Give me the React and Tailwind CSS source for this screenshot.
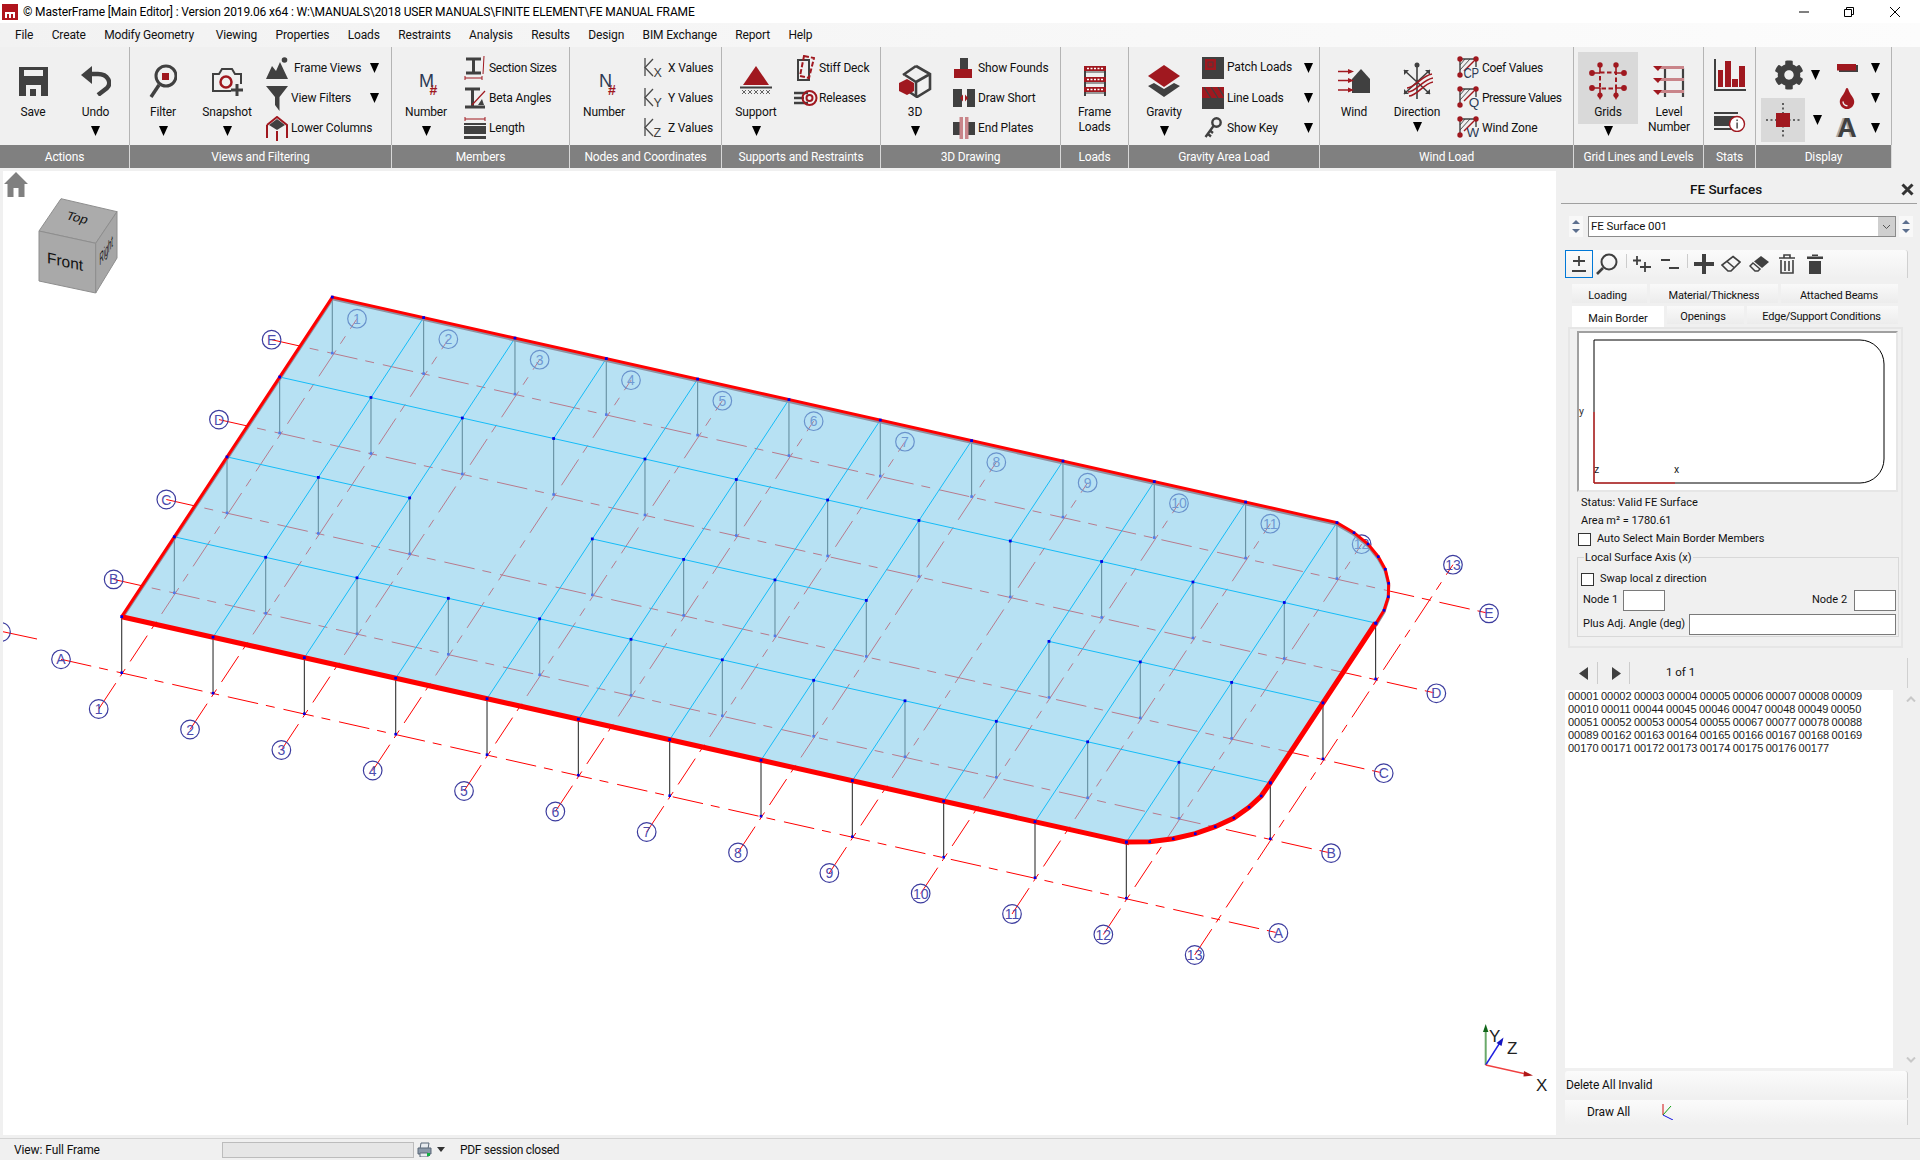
import React from "react";
import { FaCog, FaTint } from "react-icons/fa";

const D = "#404040";
const R = "#a0181f";
const L = "#f0f0f0";
const Svg = ({ w, h, children, className }) => (
  <svg width={w} height={h} viewBox={`0 0 ${w} ${h}`} className={"block shrink-0 " + (className || "")}>
    {children}
  </svg>
);
const Arrow = ({ className = "" }) => (
  <svg width="9" height="10" viewBox="0 0 9 10" className={"block shrink-0 " + className}>
    <path d="M0 0H9L4.5 10Z" fill="#000" />
  </svg>
);

const Icons = {
  save: (
    <Svg w={29} h={29}>
      <rect width="29" height="29" fill={D} />
      <rect x="5" y="3" width="19" height="6" fill={L} />
      <rect x="7" y="18" width="15" height="11" fill={L} />
      <rect x="11" y="22" width="6" height="7" fill={D} />
    </Svg>
  ),
  undo: (
    <Svg w={30} h={30}>
      <path d="M0 9 L11 0 V18Z" fill={D} />
      <path d="M8 8 H17 C27 8 31 17 26 22 L17 29" stroke={D} strokeWidth="4.4" fill="none" />
    </Svg>
  ),
  filter: (
    <Svg w={28} h={34}>
      <circle cx="17" cy="12" r="10" fill="none" stroke={D} strokeWidth="3" />
      <rect x="13" y="9" width="7" height="7" fill={R} />
      <path d="M10 21 L2 33" stroke={D} strokeWidth="3.5" />
    </Svg>
  ),
  snapshot: (
    <Svg w={32} h={29}>
      <path d="M20 24H2V7H8L11 2H21L24 7H30V17" fill="none" stroke={D} strokeWidth="2" />
      <circle cx="15" cy="15" r="5.5" fill="none" stroke={R} strokeWidth="2.5" />
      <path d="M26 17V29 M20 23H32" stroke={D} strokeWidth="3" />
    </Svg>
  ),
  frameViews: (
    <Svg w={22} h={22}>
      <path d="M0 22 L6 9 L10 14 L14 5 L22 22Z" fill={D} />
      <circle cx="18.5" cy="3" r="2.8" fill={D} />
    </Svg>
  ),
  viewFilters: (
    <Svg w={22} h={25}>
      <path d="M0 0H22L13.5 11V25L9 19V11Z" fill={D} />
    </Svg>
  ),
  lowerCols: (
    <Svg w={22} h={25}>
      <path d="M1 9 L11 1 L21 9 V22 M1 9V22 M11 15V25" fill="none" stroke={R} strokeWidth="2" />
      <path d="M3 9 L11 3 L19 9 L11 14Z" fill={D} />
    </Svg>
  ),
  m: (
    <Svg w={34} h={36}>
      <text x="10" y="24" fontSize="18" fontFamily="Liberation Sans, sans-serif" fill="#2c3a55">M</text>
      <text x="20.5" y="32" fontSize="14" fontWeight="700" fontFamily="Liberation Sans, sans-serif" fill={R}>#</text>
    </Svg>
  ),
  n: (
    <Svg w={34} h={36}>
      <text x="12" y="24" fontSize="18" fontFamily="Liberation Sans, sans-serif" fill="#2c3a55">N</text>
      <text x="21" y="32" fontSize="14" fontWeight="700" fontFamily="Liberation Sans, sans-serif" fill={R}>#</text>
    </Svg>
  ),
  section: (
    <Svg w={22} h={26}>
      <path d="M2 4H17 M9.5 4V18 M2 18H17" stroke={D} strokeWidth="3" fill="none" />
      <path d="M20 1 L19 19" stroke={R} strokeWidth="1" />
      <path d="M1 23H18 M1 21V25 M18 21V25" stroke={R} strokeWidth="1" />
    </Svg>
  ),
  beta: (
    <Svg w={22} h={24}>
      <path d="M1 3H16 M8.5 3V21 M1 21H21" stroke={D} strokeWidth="3" fill="none" />
      <path d="M21 5 L8 19" stroke={R} strokeWidth="1.2" />
      <path d="M14 19 L18 13 L20 19Z" fill={D} />
    </Svg>
  ),
  length: (
    <Svg w={22} h={24}>
      <path d="M1 3H21 M1 1V5 M21 1V5" stroke={R} strokeWidth="1" fill="none" />
      <rect y="7" width="22" height="2" fill={D} />
      <rect y="10" width="22" height="8" fill={D} />
      <rect y="20" width="22" height="3" fill={D} />
    </Svg>
  ),
  support: (
    <Svg w={32} h={32}>
      <path d="M3 20 L16 1 L29 20Z" fill={R} />
      <path d="M0 22.5H32" stroke={D} strokeWidth="2" />
      <path d="M2 25 L6 29 M6 25 L2 29 M8 25 L12 29 M12 25 L8 29 M14 25 L18 29 M18 25 L14 29 M20 25 L24 29 M24 25 L20 29 M26 25 L30 29 M30 25 L26 29" stroke={D} strokeWidth="0.8" />
    </Svg>
  ),
  stiff: (
    <Svg w={18} h={26}>
      <rect x="1" y="5" width="11" height="20" fill="none" stroke={D} strokeWidth="2" />
      <path d="M7 1 L17 3 L12 23 L3 21Z" fill="none" stroke={R} strokeWidth="2" strokeDasharray="5 2" />
    </Svg>
  ),
  releases: (
    <Svg w={24} h={20}>
      <path d="M0 5H14 M0 10H10 M0 15H14" stroke={D} strokeWidth="2.5" />
      <circle cx="15.5" cy="10" r="7" fill="none" stroke={R} strokeWidth="2" />
      <circle cx="15.5" cy="10" r="3" fill="none" stroke={R} strokeWidth="2" />
    </Svg>
  ),
  threeD: (
    <Svg w={33} h={34}>
      <path d="M17 2 L31 10 V25 L18 33 L9 27 M4 11 L17 2 M17 18 L31 10 M17 18 V32 M17 18 L6 11" fill="none" stroke={D} strokeWidth="2.6" />
      <path d="M8 15 L15 19 V27 L8 31 L0 27 V19Z" fill={R} />
    </Svg>
  ),
  founds: (
    <Svg w={20} h={20}>
      <rect x="6" width="8" height="11" fill={D} />
      <rect y="11" width="18" height="9" fill={R} />
    </Svg>
  ),
  short: (
    <Svg w={22} h={18}>
      <rect width="9" height="18" fill={D} />
      <rect x="14" width="8" height="18" fill={D} />
      <path d="M7 9 L10 5.5 V12.5Z M15 9 L12 5.5 V12.5Z" fill={R} />
    </Svg>
  ),
  plates: (
    <Svg w={22} h={22}>
      <rect y="5" width="8" height="13" fill={D} />
      <rect x="14" y="5" width="8" height="13" fill={D} />
      <rect x="6.5" width="3.5" height="22" fill="#c9858a" />
      <rect x="12" width="3.5" height="22" fill="#c9858a" />
    </Svg>
  ),
  frameLoads: (
    <Svg w={22} h={30}>
      <path d="M1 0V30 M21 0V30" stroke={D} strokeWidth="2" />
      <rect width="22" height="5" fill={R} />
      <rect y="11" width="22" height="5" fill={R} />
      <rect y="21" width="22" height="5" fill={R} />
      <path d="M3 2.5H19 M3 13.5H19 M3 23.5H19" stroke="#fff" strokeWidth="1.5" strokeDasharray="2 1.5" />
      <path d="M0 6H22 M0 17H22 M0 27H22" stroke={D} strokeWidth="1.2" />
    </Svg>
  ),
  gravity: (
    <Svg w={32} h={32}>
      <path d="M16 0 L32 11 L16 22 L0 11Z" fill={R} />
      <path d="M6 18 L16 24 L26 18 L32 21 L16 32 L0 21Z" fill={D} />
    </Svg>
  ),
  patch: (
    <Svg w={22} h={22}>
      <rect width="22" height="22" fill={D} />
      <rect x="3" y="2" width="11" height="11" fill={R} />
      <rect x="6" y="5" width="5" height="5" fill="none" stroke={D} strokeWidth="0.8" />
    </Svg>
  ),
  line: (
    <Svg w={22} h={22}>
      <rect width="22" height="22" fill={D} />
      <rect width="22" height="11" fill={R} />
      <path d="M2 0 L9 11 M9 0 L16 11 M16 0 L23 11" stroke={D} strokeWidth="1.3" />
    </Svg>
  ),
  key: (
    <Svg w={18} h={22}>
      <circle cx="12.5" cy="5.5" r="4.2" fill="none" stroke={D} strokeWidth="2.4" />
      <path d="M9.5 9 L1.5 20 M4 17 L7 19.5 M6.5 14 L9 16" stroke={D} strokeWidth="2.4" fill="none" />
    </Svg>
  ),
  wind: (
    <Svg w={32} h={24}>
      <path d="M14 10 L23 0 L32 10 V24 H14Z" fill={D} />
      <path d="M0 2.5H12 M0 11.5H12 M0 21H12" stroke={R} strokeWidth="1.6" />
      <path d="M16 2.5 L10 0 V5Z M16 11.5 L10 9 V14Z M16 21 L10 18.5 V23.5Z" fill={R} />
    </Svg>
  ),
  direction: (
    <Svg w={32} h={38}>
      <path d="M16 3V37 M3 8 L29 32 M29 8 L3 32" stroke={D} strokeWidth="1.6" />
      <circle cx="16" cy="3" r="2.5" fill={D} />
      <path d="M3 8 L8 8 L3 13Z M29 8 L24 8 L29 13Z M3 32 L8 32 L3 27Z M29 32 L24 32 L29 27Z" fill={D} />
      <path d="M6 26 C14 26 20 14 31 12 M7 30 C15 30 21 18 32 16 M8 34 C16 34 22 22 32 20" stroke={R} strokeWidth="1.6" fill="none" />
    </Svg>
  ),
  grids: (
    <Svg w={38} h={38}>
      <path d="M11 3V10 M27 3V10 M11 26V34 M27 26V34 M3 11H11 M27 11H35 M3 26H11 M27 26H35" stroke={R} strokeWidth="1.6" />
      <rect x="11" y="10.5" width="16" height="16" fill="none" stroke={R} strokeWidth="2" strokeDasharray="4.5 2.5" />
      <circle cx="11" cy="3" r="2.7" fill={R} /><circle cx="27" cy="3" r="2.7" fill={R} />
      <circle cx="3" cy="11" r="2.9" fill={R} /><circle cx="35" cy="11" r="2.9" fill={R} />
      <circle cx="3" cy="26" r="2.9" fill={R} /><circle cx="35" cy="26" r="2.9" fill={R} />
      <path d="M8.5 33 H13.5 L11 38Z M24.5 33 H29.5 L27 38Z" fill={R} />
      <circle cx="11" cy="33" r="2.6" fill={R} /><circle cx="27" cy="33" r="2.6" fill={R} />
    </Svg>
  ),
  level: (
    <Svg w={32} h={32}>
      <path d="M12 3V32 M30 3V32" stroke={D} strokeWidth="2.2" />
      <rect x="5" y="1" width="26" height="3" fill="#c9858a" />
      <rect x="5" y="13" width="26" height="3" fill="#c9858a" />
      <rect x="5" y="25" width="26" height="3" fill="#c9858a" />
      <path d="M0 1H9 L5 6Z M0 13H9 L5 18Z M0 25H9 L5 30Z" fill={R} />
    </Svg>
  ),
  stats: (
    <Svg w={32} h={32}>
      <path d="M1 0V31H32" stroke={D} strokeWidth="2" fill="none" />
      <rect x="4" y="11" width="5" height="17" fill={R} />
      <rect x="11" y="2" width="6" height="26" fill={R} />
      <rect x="18" y="20" width="6" height="8" fill={R} />
      <rect x="25" y="7" width="6" height="21" fill={R} />
    </Svg>
  ),
  info: (
    <Svg w={32} h={20}>
      <rect y="0" width="24" height="2" fill={D} />
      <rect y="4" width="24" height="10" fill={D} />
      <rect y="16" width="24" height="2" fill={D} />
      <circle cx="23" cy="12" r="7.5" fill="#fff" stroke={R} strokeWidth="1.4" />
      <rect x="22.4" y="10.5" width="1.4" height="6" fill={D} />
      <rect x="22.4" y="7.5" width="1.4" height="1.6" fill={D} />
    </Svg>
  ),
  node: (
    <Svg w={34} h={34}>
      <path d="M17 0V34 M0 17H34" stroke={D} strokeWidth="1.6" strokeDasharray="2 2.5" />
      <rect x="10" y="10" width="14" height="14" fill={R} />
    </Svg>
  ),
  bar: (
    <Svg w={21} h={8}>
      <rect x="2" y="1" width="19" height="7" fill={D} />
      <rect width="19" height="6.5" fill={R} />
    </Svg>
  ),
};

const letterIcon = (t, two) => (
  <Svg w={22} h={24}>
    <path d="M3 3H19 M3 3V19 M19 3V11" stroke={D} strokeWidth="1.4" fill="none" />
    <path d="M3 14 L13 3 M3 9 L8 3" stroke={D} strokeWidth="0.9" />
    <path d="M17 5 L7 15" stroke={R} strokeWidth="1.4" />
    <circle cx="3" cy="3" r="2.7" fill={R} />
    <circle cx="19" cy="3" r="2.7" fill={R} />
    <circle cx="3" cy="19" r="2.7" fill={R} />
    {two ? (
      <text x="6.5" y="22" fontSize="14" textLength="15.5" lengthAdjust="spacingAndGlyphs" fontFamily="Liberation Sans, sans-serif" fill="#2c3a55">{t}</text>
    ) : (
      <text x="22" y="21" textAnchor="end" fontSize="13.5" fontFamily="Liberation Sans, sans-serif" fill="#2c3a55">{t}</text>
    )}
  </Svg>
);
const axisIcon = (t) => (
  <Svg w={20} h={22}>
    <path d="M9 2 L1 10.5 L9 19" stroke="#4a4a4a" strokeWidth="1.3" fill="none" />
    <path d="M1 1 V 19" stroke="#4a4a4a" strokeWidth="1.3" />
    <text x="9.5" y="20" fontSize="12.5" fontFamily="Liberation Sans, sans-serif" fill="#404040">{t}</text>
  </Svg>
);

const Big = ({ cn = "", label, arrow, icon, arrowCn = "mt-[6px]", boxCn = "pt-[14px]" }) => (
  <div className={"flex flex-col items-center shrink-0 " + cn}>
    <div className={"flex flex-col items-center w-full " + boxCn}>
      <div className="h-[40px] flex items-center justify-center">{icon}</div>
      <div className="mt-[4px] leading-[15px] text-center">{label}</div>
    </div>
    {arrow && <Arrow className={arrowCn} />}
  </div>
);
const Row = ({ icon, label, arrow, cn = "w-[28px]", textCn = "" }) => (
  <div className="h-[30px] flex items-center">
    <div className={"flex justify-center shrink-0 " + cn}>{icon}</div>
    {label && <span className={"whitespace-nowrap " + textCn}>{label}</span>}
    {arrow && <Arrow className="ml-auto" />}
  </div>
);
const Col = ({ cn = "", children }) => <div className={"flex flex-col pt-[6px] shrink-0 " + cn}>{children}</div>;
const Group = ({ w, label, children }) => (
  <div className={"flex flex-col shrink-0 " + w}>
    <div className="h-[98px] flex border-r border-[#b4b4b4]">{children}</div>
    <div className="h-[23px] bg-[#808080] text-white flex items-center justify-center leading-none border-r border-[#d8d8d8]">{label}</div>
  </div>
);

const Ribbon = () => (
  <div className="h-[121px] flex text-[12px] text-[#111] tracking-[-0.15px]">
    <Group w="w-[130px]" label="Actions">
      <Big cn="w-[62px] ml-[2px]" icon={Icons.save} label="Save" />
      <Big cn="w-[63px]" icon={Icons.undo} label="Undo" arrow />
    </Group>
    <Group w="w-[262px]" label="Views and Filtering">
      <Big cn="w-[64px] ml-[1px]" icon={Icons.filter} label="Filter" arrow />
      <Big cn="w-[64px]" icon={Icons.snapshot} label="Snapshot" arrow />
      <Col cn="w-[116px] ml-[4px]">
        <Row icon={Icons.frameViews} label="Frame Views" arrow textCn="pl-[3px]" />
        <Row icon={Icons.viewFilters} label="View Filters" arrow />
        <Row icon={Icons.lowerCols} label="Lower Columns" />
      </Col>
    </Group>
    <Group w="w-[178px]" label="Members">
      <Big cn="w-[64px] ml-[2px]" icon={Icons.m} label="Number" arrow />
      <Col cn="w-[100px] ml-[3px]">
        <Row icon={Icons.section} label="Section Sizes" textCn="tracking-[-0.3px]" />
        <Row icon={Icons.beta} label="Beta Angles" />
        <Row icon={Icons.length} label="Length" />
      </Col>
    </Group>
    <Group w="w-[152px]" label="Nodes and Coordinates">
      <Big cn="w-[66px] ml-[1px]" icon={Icons.n} label="Number" />
      <Col cn="w-[80px] ml-[3px]">
        <Row icon={axisIcon("X")} label="X Values" />
        <Row icon={axisIcon("Y")} label="Y Values" />
        <Row icon={axisIcon("Z")} label="Z Values" />
      </Col>
    </Group>
    <Group w="w-[159px]" label="Supports and Restraints">
      <Big cn="w-[66px] ml-[1px]" icon={Icons.support} label="Support" arrow />
      <Col cn="w-[85px] ml-[3px]">
        <Row cn="w-[27px]" icon={Icons.stiff} label="Stiff Deck" />
        <Row cn="w-[27px]" icon={Icons.releases} label="Releases" />
      </Col>
    </Group>
    <Group w="w-[180px]" label="3D Drawing">
      <Big cn="w-[66px] ml-[1px]" icon={Icons.threeD} label="3D" arrow />
      <Col cn="w-[100px] ml-[2px]">
        <Row icon={Icons.founds} label="Show Founds" />
        <Row icon={Icons.short} label="Draw Short" />
        <Row icon={Icons.plates} label="End Plates" />
      </Col>
    </Group>
    <Group w="w-[68px]" label="Loads">
      <Big cn="w-[67px]" icon={Icons.frameLoads} label={<>Frame<br />Loads</>} />
    </Group>
    <Group w="w-[191px]" label="Gravity Area Load">
      <Big cn="w-[68px] ml-[1px]" icon={Icons.gravity} label="Gravity" arrow />
      <Col cn="w-[114px] ml-[1px]">
        <Row icon={Icons.patch} label="Patch Loads" arrow textCn="mb-[2px]" />
        <Row icon={Icons.line} label="Line Loads" arrow />
        <Row icon={Icons.key} label="Show Key" arrow />
      </Col>
    </Group>
    <Group w="w-[254px]" label="Wind Load">
      <Big cn="w-[66px] ml-[1px]" icon={Icons.wind} label="Wind" />
      <Big cn="w-[60px]" icon={Icons.direction} label="Direction" arrow arrowCn="mt-[2px]" />
      <Col cn="w-[125px] ml-[7px]">
        <Row icon={letterIcon("CP", true)} label="Coef Values" textCn="tracking-[-0.3px]" />
        <Row icon={letterIcon("Q")} label="Pressure Values" textCn="tracking-[-0.45px]" />
        <Row icon={letterIcon("W")} label="Wind Zone" />
      </Col>
    </Group>
    <Group w="w-[130px]" label="Grid Lines and Levels">
      <Big cn="w-[60px] ml-[4px]" boxCn="bg-[#d9d9d9] mt-[5px] pt-[9px] h-[72px]" icon={Icons.grids} label="Grids" arrow arrowCn="mt-[2px]" />
      <Big cn="w-[62px]" icon={Icons.level} label={<>Level<br />Number</>} />
    </Group>
    <Group w="w-[52px]" label="Stats">
      <div className="w-[51px] flex flex-col items-center pt-[12px] gap-[21px]">
        {Icons.stats}
        {Icons.info}
      </div>
    </Group>
    <Group w="w-[136px]" label="Display">
      <div className="flex flex-col w-[66px] ml-[5px]">
        <div className="h-[51px] flex items-center pt-[5px]">
          <FaCog className="w-[30px] h-[30px] ml-[13px]" color={D} />
          <Arrow className="ml-[7px]" />
        </div>
        <div className="flex items-center">
          <div className="w-[44px] h-[44px] bg-[#d9d9d9] flex items-center justify-center">{Icons.node}</div>
          <Arrow className="ml-[8px]" />
        </div>
      </div>
      <Col cn="w-[50px] ml-[3px]">
        <Row cn="w-[34px]" icon={Icons.bar} arrow />
        <Row cn="w-[34px]" icon={<FaTint className="w-[16px] h-[21px]" color={R} />} arrow />
        <Row
          cn="w-[34px]"
          icon={<span className="text-[27px] leading-none font-bold text-[#404040] [text-shadow:-2px_0_0_#a8a8a8] [font-family:'Liberation_Sans',sans-serif]">A</span>}
          arrow
        />
      </Col>
    </Group>
  </div>
);

/* ---------- drawing ---------- */
const n = (i, j) => [121.7 + 91.33 * i + 52.65 * j, 616.7 + 20.5 * i - 79.9 * j];
const H = 56;
const upperCurve = [[1354, 532.7], [1368, 544], [1378.3, 556.7], [1385.3, 569.3], [1388.7, 583.3], [1388.3, 596.7], [1384, 610.3], [1376, 623.3]];
const lowerCurve = [[1270.3, 783], [1261.2, 796], [1249, 807.3], [1233.9, 818], [1215.2, 826.7], [1195.3, 833.7], [1173.2, 838.7], [1149.7, 841.7], [1126.3, 842]];
const pts = (a) => a.map((p) => p[0].toFixed(1) + " " + p[1].toFixed(1)).join(" L");
const plate =
  "M" + pts([n(0, 0), n(0, 4), n(11, 4), ...upperCurve, n(12, 1), ...lowerCurve]) + "Z";
const hasNode = (i, j) => {
  if (i === 12 && (j === 0 || j === 4)) return false;
  if ((i === 3 || i === 8) && j === 2) return false;
  return true;
};
const nodes = [];
for (let i = 0; i <= 12; i++) for (let j = 0; j <= 4; j++) if (hasNode(i, j)) nodes.push(n(i, j));
const beamSegs = [];
[[1, 0, 12], [2, 0, 2], [2, 4, 7], [2, 9, 12], [3, 0, 12]].forEach(([j, a, b]) => beamSegs.push([n(a, j), n(b, j)]));
[1, 2, 4, 5, 6, 7, 9, 10, 11].forEach((i) => beamSegs.push([n(i, 0), n(i, 4)]));
[3, 8].forEach((i) => {
  beamSegs.push([n(i, 0), n(i, 1)]);
  beamSegs.push([n(i, 3), n(i, 4)]);
});
const gridI = Array.from({ length: 13 }, (_, k) => ({
  t: String(k + 1),
  a: [98.7 + 91.33 * k, 709 + 20.5 * k],
  b: [357 + 91.33 * k, 318.7 + 20.5 * k],
}));
const gridJ = ["A", "B", "C", "D", "E"].map((t, k) => ({
  t,
  a: [61 + 52.65 * k, 659.3 - 79.9 * k],
  b: [1278.4 + 52.65 * k, 933 - 79.9 * k],
}));
const dash = "31 8 9 9";
const Lab = ({ p, t }) => (
  <g>
    <circle cx={p[0]} cy={p[1]} r="9.3" fill="none" stroke="#3c3c9e" strokeWidth="1.2" />
    <text x={p[0]} y={p[1] + 5} textAnchor="middle" fontSize="14" fontFamily="Liberation Sans, sans-serif" fill="#4c4cae">{t}</text>
  </g>
);

const Drawing = () => (
  <svg className="block w-[1553px] h-[964px]" viewBox="3 171 1553 964">
    {[...gridI, ...gridJ].map((g) => (
      <line key={g.t} x1={g.a[0]} y1={g.a[1]} x2={g.b[0]} y2={g.b[1]} stroke="#ff0000" strokeWidth="1" strokeDasharray={dash} />
    ))}
    <line x1="2" y1="631.5" x2="37" y2="639" stroke="#ff0000" strokeWidth="1" />
    <Lab p={[1, 632]} t="I" />
    {nodes.map((p, k) => (
      <line key={k} x1={p[0]} y1={p[1]} x2={p[0]} y2={p[1] + H} stroke="#333" strokeWidth="1.1" />
    ))}
    {gridI.map((g) => <Lab key={g.t} p={g.a} t={g.t} />)}
    {gridI.map((g) => <Lab key={g.t} p={g.b} t={g.t} />)}
    {gridJ.map((g) => <Lab key={g.t} p={g.a} t={g.t} />)}
    {gridJ.map((g) => <Lab key={g.t} p={g.b} t={g.t} />)}
    {nodes.map((p, k) => (
      <rect key={k} x={p[0] - 1.3} y={p[1] + H - 1.3} width="2.6" height="2.6" fill="#0000e6" />
    ))}
    <path d={plate} fill="#87cdeb" fillOpacity="0.6" />
    {beamSegs.map((s, k) => (
      <line key={k} x1={s[0][0]} y1={s[0][1]} x2={s[1][0]} y2={s[1][1]} stroke="#14bcf8" strokeWidth="1" />
    ))}
    <path d={"M" + pts([n(0, 0), n(0, 4), n(11, 4), ...upperCurve])} transform="translate(0 1.8)" fill="none" stroke="#8f8f9f" strokeWidth="3" />
    <path d={"M" + pts([n(0, 0), n(0, 4), n(11, 4), ...upperCurve, n(12, 3)])} fill="none" stroke="#ff0000" strokeWidth="3" />
    <path d={"M" + pts([n(12, 3), n(12, 1), ...lowerCurve, n(11, 0), n(0, 0)])} fill="none" stroke="#ff0000" strokeWidth="5" />
    {nodes.map((p, k) => (
      <rect key={k} x={p[0] - 1.4} y={p[1] - 1.4} width="2.8" height="2.8" fill="#0000e6" />
    ))}
    {[...upperCurve, ...lowerCurve].map((p, k) => (
      <rect key={k} x={p[0] - 1.3} y={p[1] - 1.3} width="2.6" height="2.6" fill="#0000e6" />
    ))}
    {/* view cube */}
    <path d="M61 198.7 L117 211.7 L95.7 243.3 L39 231Z" fill="#ababab" stroke="#8e8e8e" />
    <path d="M39 231 L95.7 243.3 V293 L39 281Z" fill="#a9a9a9" stroke="#8e8e8e" />
    <path d="M95.7 243.3 L117 211.7 V258 L95.7 293Z" fill="#a6a6a6" stroke="#8e8e8e" />
    <text transform="matrix(1 .24 -.42 .85 65 219)" fontSize="13" fontFamily="Liberation Sans, sans-serif" fill="#111">Top</text>
    <text transform="matrix(1 .217 0 1 47 263)" fontSize="15.5" fontFamily="Liberation Sans, sans-serif" fill="#111">Front</text>
    <text transform="matrix(.44 -.66 0 1.3 99.5 266)" fontSize="13" fontFamily="Liberation Sans, sans-serif" fill="#111">Right</text>
    {/* triad */}
    <path d="M1485.7 1065V1028" stroke="#6aa96a" strokeWidth="2" />
    <path d="M1485.7 1024 L1483 1032 H1488.4Z" fill="#11661a" />
    <path d="M1485.7 1065 L1501 1041" stroke="#1f1fe0" strokeWidth="1.4" />
    <path d="M1503.5 1037.5 L1496.5 1043 L1501.5 1046Z" fill="#1515c0" />
    <path d="M1485.7 1065 L1526 1074" stroke="#f04040" strokeWidth="1.4" />
    <path d="M1533 1075.5 L1524 1071 L1523.5 1076.5Z" fill="#b01818" />
    <text x="1489" y="1042" fontSize="17" fontFamily="Liberation Sans, sans-serif" fill="#222">Y</text>
    <text x="1507" y="1054" fontSize="17" fontFamily="Liberation Sans, sans-serif" fill="#222">Z</text>
    <text x="1536" y="1091" fontSize="17" fontFamily="Liberation Sans, sans-serif" fill="#222">X</text>
  </svg>
);

/* ---------- side panel ---------- */
const Spin = ({ cn = "" }) => (
  <svg width="14" height="21" viewBox="0 0 14 21" className={"block bg-[#f8f8f8] " + cn}>
    <path d="M3 8 L7 4 L11 8Z M3 13 L7 17 L11 13Z" fill="#5c6f8e" />
  </svg>
);
const Tab = ({ cn = "", textCn = "", children }) => (
  <div className={"bg-gradient-to-b from-[#f9f9f9] to-[#ececec] flex justify-center items-start tracking-[-0.1px] " + cn}>
    <span className={"block overflow-hidden h-[13px] leading-[15px] whitespace-nowrap " + textCn}>{children}</span>
  </div>
);
const Box = ({ cn = "" }) => <div className={"h-[21px] bg-white border border-[#7a7a7a] shrink-0 " + cn} />;
const Check = () => <div className="w-[13px] h-[13px] bg-white border border-[#333] shrink-0" />;
const DK = "#404040";

const Tools = () => (
  <div className="ml-[9px] w-[343px] h-[28px] flex items-center bg-gradient-to-b from-[#fbfbfb] to-[#f0f0f0] rounded-t-[3px] border-r border-r-[#d0d0d0]">
    <div className="w-[28px] h-[28px] border border-[#0078d7] flex items-center justify-center">
      <svg width="16" height="18" viewBox="0 0 16 18"><path d="M8 1V11 M2 6H14 M1 16H15" stroke={DK} strokeWidth="1.8" /></svg>
    </div>
    <div className="w-[28px] flex justify-center">
      <svg width="22" height="22" viewBox="0 0 22 22"><circle cx="13" cy="9" r="7.5" fill="none" stroke={DK} strokeWidth="2" /><path d="M7 15 L1 21" stroke={DK} strokeWidth="2.6" /></svg>
    </div>
    <div className="w-px h-[14px] bg-[#ccc] ml-[5px] mb-[6px]" />
    <div className="w-[28px] ml-[1px] flex justify-center">
      <svg width="20" height="18" viewBox="0 0 20 18"><path d="M5 1V10 M1 5.5H9 M13 7V17 M8 12H19" stroke={DK} strokeWidth="1.8" /></svg>
    </div>
    <div className="w-[28px] flex justify-center">
      <svg width="20" height="16" viewBox="0 0 20 16"><path d="M1 4H10 M9 12H19" stroke={DK} strokeWidth="1.8" /></svg>
    </div>
    <div className="w-px h-[14px] bg-[#ccc] ml-[3px] mb-[6px]" />
    <div className="w-[32px] flex justify-center">
      <svg width="20" height="20" viewBox="0 0 20 20"><path d="M10 0V20 M0 10H20" stroke={DK} strokeWidth="4" /></svg>
    </div>
    <div className="w-[28px] flex justify-center ml-[-3px]">
      <svg width="20" height="18" viewBox="0 0 20 18"><path d="M12 1.5 L19 7 L10 16 L7 16 L1 10Z M5.5 6 L13 12.5" fill="none" stroke={DK} strokeWidth="1.6" /></svg>
    </div>
    <div className="w-[28px] flex justify-center">
      <svg width="20" height="18" viewBox="0 0 20 18"><path d="M12 1 L20 7 L13 13 L5 6.5Z" fill={DK} /><path d="M4 8 L11 14 L9 16 H6 L1 11Z" fill="none" stroke={DK} strokeWidth="1.5" /></svg>
    </div>
    <div className="w-[28px] flex justify-center">
      <svg width="16" height="20" viewBox="0 0 16 20"><path d="M0 4H16 M5 4V1H11V4" stroke={DK} strokeWidth="1.6" fill="none" /><path d="M2 6V19H14V6 M6 7V17 M10 7V17" stroke={DK} strokeWidth="1.6" fill="none" /></svg>
    </div>
    <div className="w-[28px] flex justify-center">
      <svg width="16" height="20" viewBox="0 0 16 20"><path d="M0 2.5H16V5H0Z M5 2V0.5H11V2Z M2 7H14V20H2Z" fill={DK} /></svg>
    </div>
  </div>
);

const Pane = () => (
  <div className="ml-[12px] w-[335px] h-[321px] border-2 border-[#e6e6e6] bg-[#f0f0f0] flex flex-col shrink-0">
    <div className="mt-[2px] ml-[7px] w-[321px] h-[161px] bg-white border-2 border-t-[#a0a0a0] border-l-[#a0a0a0] border-r-[#e6e6e6] border-b-[#e6e6e6]">
      <svg width="317" height="157" viewBox="1579 333 317 157" className="block">
        <path d="M1594 483 V340 H1860 A24 24 0 0 1 1884 364 V459 A24 24 0 0 1 1860 483Z" fill="none" stroke="#000" strokeWidth="1" />
        <path d="M1594 412 V483 H1675" fill="none" stroke="#ee1111" strokeWidth="1" />
        <text x="1579" y="415" fontSize="10.5" fontFamily="Roboto, sans-serif" fill="#333">y</text>
        <text x="1594" y="473" fontSize="10.5" fontFamily="Roboto, sans-serif" fill="#222">z</text>
        <text x="1674" y="473" fontSize="10.5" fontFamily="Roboto, sans-serif" fill="#222">x</text>
      </svg>
    </div>
    <div className="ml-[11px] mt-[3px] h-[15px] leading-[15px]">Status: Valid FE Surface</div>
    <div className="ml-[11px] mt-[3px] h-[15px] leading-[15px]">Area m² = 1780.61</div>
    <div className="ml-[8px] mt-[4px] h-[15px] flex items-center gap-[6px]">
      <Check />
      <span>Auto Select Main Border Members</span>
    </div>
    <div className="ml-[7px] mt-[10px] w-[322px] h-[80px] border border-[#d8d8d8] relative pt-[15px] pl-[3px]">
      <span className="absolute left-[6px] top-[-8px] bg-[#f0f0f0] px-[1px] leading-[15px]">Local Surface Axis (x)</span>
      <div className="flex items-center gap-[6px] h-[13px]">
        <Check />
        <span>Swap local z direction</span>
      </div>
      <div className="flex items-center mt-[4px] pl-[2px]">
        <span className="w-[40px]">Node 1</span>
        <Box cn="w-[42px]" />
        <span className="ml-[147px] w-[42px]">Node 2</span>
        <Box cn="w-[42px]" />
      </div>
      <div className="flex items-center mt-[3px] pl-[2px]">
        <span className="w-[106px] whitespace-nowrap">Plus Adj. Angle (deg)</span>
        <Box cn="w-[207px]" />
      </div>
    </div>
  </div>
);

const ids = `00001 00002 00003 00004 00005 00006 00007 00008 00009
00010 00011 00044 00045 00046 00047 00048 00049 00050
00051 00052 00053 00054 00055 00067 00077 00078 00088
00089 00162 00163 00164 00165 00166 00167 00168 00169
00170 00171 00172 00173 00174 00175 00176 00177`.split("\n");

const Panel = () => (
  <aside className="w-[364px] flex flex-col text-[11px] text-[#111]">
    <div className="ml-[5px] mr-[3px] h-[33px] pt-[4px] border-b border-[#a0a0a0] flex items-center shrink-0">
      <span className="ml-[129px] text-[13.5px] font-medium">FE Surfaces</span>
      <svg width="13" height="13" viewBox="0 0 13 13" className="ml-auto mr-[3px]"><path d="M1.5 1.5 L11.5 11.5 M11.5 1.5 L1.5 11.5" stroke="#333" strokeWidth="3" /></svg>
    </div>
    <div className="mt-[12px] ml-[13px] h-[21px] flex items-center shrink-0">
      <Spin />
      <div className="ml-[5px] w-[308px] h-[21px] bg-white border border-[#8a8a8a] flex items-center shrink-0">
        <span className="pl-[2px] text-[11.5px] tracking-[-0.1px]">FE Surface 001</span>
        <div className="ml-auto w-[17px] h-[19px] bg-[#cfcfcf] flex items-center justify-center">
          <svg width="9" height="6" viewBox="0 0 9 6"><path d="M1 1 L4.5 4.5 L8 1" fill="none" stroke="#555" /></svg>
        </div>
      </div>
      <Spin cn="ml-[3px]" />
    </div>
    <div className="mt-[13px] shrink-0"><Tools /></div>
    <div className="mt-[6px] ml-[16px] flex gap-[3px] shrink-0 h-[19px]">
      <Tab cn="w-[75px] h-[19px] pt-[4px] pr-[4px]">Loading</Tab>
      <Tab cn="w-[128px] h-[19px] pt-[4px]" textCn="tracking-[-0.2px]">Material/Thickness</Tab>
      <Tab cn="w-[117px] h-[19px] pt-[4px] pr-[1px]" textCn="tracking-[-0.2px]">Attached Beams</Tab>
    </div>
    <div className="mt-[3px] ml-[16px] flex gap-[3px] items-start h-[21px] shrink-0">
      <div className="w-[92px] h-[21px] bg-white flex justify-center pt-[5px] leading-[15px]">Main Border</div>
      <Tab cn="w-[77px] h-[18px] pt-[3px] pr-[5px]">Openings</Tab>
      <Tab cn="w-[151px] h-[18px] pt-[3px] pr-[2px]" textCn="tracking-[-0.2px]">Edge/Support Conditions</Tab>
    </div>
    <Pane />
    <div className="mt-[10px] h-[30px] flex items-center ml-[9px] w-[343px] shrink-0 border-r border-[#d0d0d0]">
      <svg width="10" height="13" viewBox="0 0 10 13" className="ml-[14px]"><path d="M9 0V13L0 6.5Z" fill={DK} /></svg>
      <div className="w-px h-[22px] bg-[#ccc] ml-[8px]" />
      <svg width="10" height="13" viewBox="0 0 10 13" className="ml-[13px]"><path d="M1 0V13L10 6.5Z" fill={DK} /></svg>
      <div className="w-px h-[22px] bg-[#ccc] ml-[8px]" />
      <span className="ml-[36px] text-[11.5px] mb-[1px]">1 of 1</span>
    </div>
    <div className="mt-[2px] ml-[9px] h-[378px] flex shrink-0">
      <div className="w-[328px] h-full bg-white pl-[3px] leading-[13px] text-[11px] [word-spacing:-0.7px] text-[#1a1a1a] [font-family:'Liberation_Sans',sans-serif] shrink-0">
        {ids.map((l) => <div key={l} className="whitespace-nowrap">{l}</div>)}
      </div>
      <div className="w-[18px] flex flex-col items-center justify-between pt-[6px] pb-[5px] ml-[9px]">
        <svg width="10" height="6" viewBox="0 0 10 6"><path d="M1 5.5 L5 1.5 L9 5.5" fill="none" stroke="#c8c8c8" strokeWidth="2" /></svg>
        <svg width="10" height="6" viewBox="0 0 10 6"><path d="M1 0.5 L5 4.5 L9 0.5" fill="none" stroke="#c8c8c8" strokeWidth="2" /></svg>
      </div>
    </div>
    <div className="mt-[3px] ml-[9px] w-[343px] h-[27px] bg-gradient-to-b from-[#fbfbfb] to-[#f0f0f0] flex items-center pl-[1px] text-[12px] tracking-[-0.1px] border-r border-r-[#d0d0d0] shrink-0 rounded-t-[3px]">Delete All Invalid</div>
    <div className="mt-[2px] ml-[9px] w-[343px] h-[25px] pb-[2px] bg-gradient-to-b from-[#fbfbfb] to-[#f0f0f0] flex items-center pl-[22px] text-[12px] tracking-[-0.1px] border-r border-r-[#d0d0d0] shrink-0">
      <span>Draw All</span>
      <svg width="11" height="16" viewBox="0 0 11 16" className="ml-[32px]">
        <path d="M1 0V11" stroke="#d01010" />
        <path d="M1 11 L9 2" stroke="#10a010" />
        <path d="M1 11 L11 16" stroke="#1010e0" />
      </svg>
    </div>
  </aside>
);

const Printer = () => (
  <svg width="15" height="15" viewBox="0 0 15 15">
    <path d="M4 1H12L11 7H3Z" fill="#e8ecf0" stroke="#5a6878" />
    <path d="M1 6H14V12H1Z" fill="#8a98a8" stroke="#5a6878" />
    <path d="M3 11H11V15H3Z" fill="#e8ecf0" stroke="#5a6878" />
    <rect x="10" y="11" width="3" height="3" fill="#10b040" />
  </svg>
);

export default function App() {
  return (
    <div className="w-[1920px] h-[1160px] flex flex-col bg-[#f0f0f0] overflow-hidden text-[#111] [font-family:'Roboto','Liberation_Sans',sans-serif]">
      <div className="h-[23px] bg-white flex items-center text-[12px] text-black shrink-0">
        <svg width="16" height="16" viewBox="0 0 16 16" className="ml-[2px] mr-[5px]">
          <rect width="16" height="16" fill="#b0141c" />
          <path d="M3 8H13V14H11V10H9V14H7V10H5V14H3Z" fill="#fff" />
        </svg>
        <span className="whitespace-nowrap tracking-[-0.14px]">© MasterFrame [Main Editor] : Version 2019.06 x64 : W:\MANUALS\2018 USER MANUALS\FINITE ELEMENT\FE MANUAL FRAME</span>
        <div className="ml-auto flex items-center">
          <svg width="12" height="2" viewBox="0 0 12 2" className="mr-[33px]"><path d="M1 1H11" stroke="#000" /></svg>
          <svg width="12" height="12" viewBox="0 0 12 12" className="mr-[34px]"><path d="M1.5 3.5H8.5V10.5H1.5Z M3.5 3.5V1.5H10.5V8.5H8.5" fill="none" stroke="#000" /></svg>
          <svg width="12" height="12" viewBox="0 0 12 12" className="mr-[19px]"><path d="M1 1L11 11M11 1L1 11" stroke="#000" /></svg>
        </div>
      </div>
      <div className="h-[24px] bg-gradient-to-r from-[#f2f2f2] to-[#fcfcfc] flex items-center pl-[15px] gap-[18.4px] text-[12px] tracking-[-0.14px] shrink-0">
        <span className="whitespace-nowrap">File</span>
        <span className="whitespace-nowrap">Create</span>
        <span className="whitespace-nowrap pr-[3.5px]">Modify Geometry</span>
        {["Viewing", "Properties", "Loads", "Restraints", "Analysis", "Results", "Design", "BIM Exchange", "Report", "Help"].map((m) => (
          <span key={m} className="whitespace-nowrap">{m}</span>
        ))}
      </div>
      <div className="shrink-0"><Ribbon /></div>
      <div className="h-[964px] mt-[3px] flex pl-[3px] shrink-0">
        <div className="w-[1553px] h-full bg-white relative shrink-0">
          <svg width="24" height="25" viewBox="0 0 24 25" className="absolute left-[1px] top-[1px]">
            <path d="M12 0 L24 12 H20.5 V25 H14.5 V16 H9.5 V25 H3.5 V12 H0Z" fill="#808080" />
          </svg>
          <Drawing />
        </div>
        <Panel />
      </div>
      <div className="mt-[3px] flex-1 border-t border-[#d4d4d4] flex items-center text-[12px] tracking-[-0.1px]">
        <span className="ml-[14px] w-[208px]">View: Full Frame</span>
        <div className="w-[192px] h-[16px] bg-[#e6e6e6] border border-[#bcbcbc]" />
        <div className="ml-[3px]"><Printer /></div>
        <svg width="8" height="5" viewBox="0 0 8 5" className="ml-[5px]"><path d="M0 0H8L4 5Z" fill="#333" /></svg>
        <span className="ml-[15px] tracking-[-0.3px]">PDF session closed</span>
      </div>
    </div>
  );
}
